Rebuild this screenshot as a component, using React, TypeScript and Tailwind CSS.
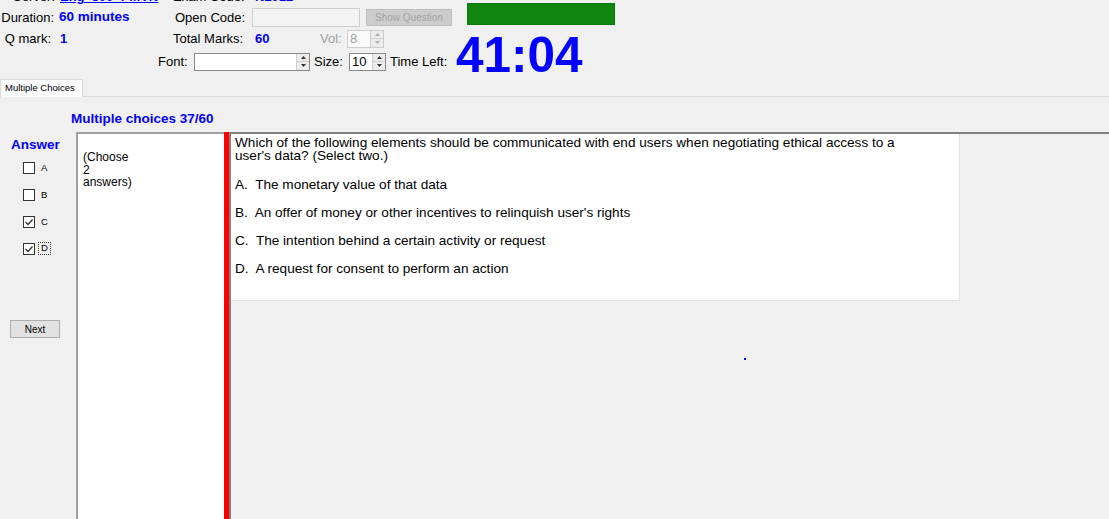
import React from "react";

function SpinArrows({ disabled }: { disabled?: boolean }) {
  const c = disabled ? "#b0b0b0" : "#333333";
  return (
    <div className="flex flex-col w-[13px] h-full border-l border-[#cfcfcf]">
      <div className="flex-1 flex items-center justify-center bg-[#ececec] border-b border-[#cfcfcf]">
        <svg width="5" height="3" viewBox="0 0 5 3">
          <path d="M0 3 L2.5 0 L5 3Z" fill={c} />
        </svg>
      </div>
      <div className="flex-1 flex items-center justify-center bg-[#ececec]">
        <svg width="5" height="3" viewBox="0 0 5 3">
          <path d="M0 0 L2.5 3 L5 0Z" fill={c} />
        </svg>
      </div>
    </div>
  );
}

function Spinner({ value, width, disabled }: { value: string; width: string; disabled?: boolean }) {
  return (
    <div
      className={`flex h-[18px] border ${width} ${
        disabled ? "border-[#cccccc] text-[#a0a0a0] bg-[#fafafa]" : "border-[#8a8a8a] text-black bg-white"
      }`}
    >
      <div className="flex-1 text-[13px] leading-[16px] pl-[2px]">{value}</div>
      <SpinArrows disabled={disabled} />
    </div>
  );
}

function Check({ label, checked, focus }: { label: string; checked?: boolean; focus?: boolean }) {
  return (
    <div className="h-[27px] flex items-center pl-[23px]">
      <div className="w-[12px] h-[12px] border border-[#333333] bg-white flex items-center justify-center">
        {checked && (
          <svg width="10" height="10" viewBox="0 0 10 10">
            <path d="M1.5 5 L4 7.5 L8.5 2.5" stroke="#333333" strokeWidth="1.3" fill="none" />
          </svg>
        )}
      </div>
      {focus ? (
        <span className="ml-[3px] px-[2px] h-[13px] flex items-center border border-dotted border-[#333333] text-[9.5px]">
          {label}
        </span>
      ) : (
        <span className="ml-[6px] text-[9.5px] leading-[11px]">{label}</span>
      )}
    </div>
  );
}

const options = [
  "A.  The monetary value of that data",
  "B.  An offer of money or other incentives to relinquish user's rights",
  "C.  The intention behind a certain activity or request",
  "D.  A request for consent to perform an action",
];

export default function App() {
  return (
    <div
      className="h-[519px] w-full overflow-hidden bg-[#f0f0f0] flex flex-col text-black"
      style={{ fontFamily: '"Liberation Sans", Arial, sans-serif' }}
    >
      {/* header */}
      <div className="h-[79px] flex shrink-0">
        <div className="w-[456px] flex flex-col text-[13px]">
          <div className="h-[20px] mt-[-13px] flex items-center">
            <span className="w-[55px] text-right">Server:</span>
            <span className="ml-[5px] w-[113px] font-bold text-[#0000ff] underline">Eng_500_PMVN</span>
            <span className="w-[82px]">Exam Code:</span>
            <span className="font-bold text-[#0000ff]">N2012</span>
          </div>
          <div className="h-[21px] flex items-center">
            <span className="w-[54px] text-right">Duration:</span>
            <span className="ml-[5px] w-[116px] font-bold text-[#0000ff] text-[13.5px]">60 minutes</span>
            <span className="w-[77px]">Open Code:</span>
            <div className="w-[108px] h-[19px] border border-[#cfcfcf] bg-[#f3f3f3]" />
            <div className="ml-[6px] w-[86px] h-[17px] bg-[#cccccc] border border-[#bfbfbf] flex items-center justify-center text-[10px] text-[#a3a3a3]">
              Show Question
            </div>
          </div>
          <div className="h-[21px] flex items-center">
            <span className="w-[51px] text-right">Q mark:</span>
            <span className="ml-[9px] w-[113px] font-bold text-[#0000ff]">1</span>
            <span className="w-[82px]">Total Marks:</span>
            <span className="w-[65px] font-bold text-[#0000ff]">60</span>
            <span className="w-[27px] text-[#a0a0a0]">Vol:</span>
            <Spinner value="8" width="w-[37px]" disabled />
          </div>
          <div className="h-[21px] mt-[2px] flex items-center">
            <span className="ml-[158px] w-[36px]">Font:</span>
            <Spinner value="" width="w-[116px]" />
            <span className="ml-[4px] w-[35px]">Size:</span>
            <Spinner value="10" width="w-[37px]" />
            <span className="ml-[4px]">Time Left:</span>
          </div>
        </div>
        <div className="flex flex-col">
          <div className="mt-[3px] ml-[11px] w-[148px] h-[24px] bg-[#0f870f] border border-[#0c7a0c]" />
          <div className="mt-[5px] text-[49.5px] leading-[49px] font-bold text-[#0000ff]">41:04</div>
        </div>
      </div>

      {/* tab strip */}
      <div className="h-[18px] shrink-0 flex border-b border-[#d9d9d9]">
        <div className="w-[83px] h-[18px] bg-[#fcfcfc] border border-b-0 border-[#d9d9d9] flex items-center pl-[4px] text-[9.5px]">
          Multiple Choices
        </div>
      </div>

      {/* panel title */}
      <div className="h-[35px] shrink-0 pt-[15px] pl-[71px] text-[13.5px] leading-[14px] font-bold text-[#0000ff]">
        Multiple choices 37/60
      </div>

      {/* main */}
      <div className="flex-1 min-h-0 flex">
        <div className="w-[76px] shrink-0 flex flex-col">
          <div className="pt-[6px] pl-[11px] text-[13.5px] leading-[14px] font-bold text-[#0000ff]">Answer</div>
          <div className="mt-[2px] flex flex-col">
            <Check label="A" />
            <Check label="B" />
            <Check label="C" checked />
            <Check label="D" checked focus />
          </div>
          <div className="mt-[58px] ml-[10px] w-[50px] h-[18px] bg-[#e1e1e1] border border-[#adadad] flex items-center justify-center text-[10px]">
            Next
          </div>
        </div>

        <div className="w-[148px] shrink-0 bg-white border-l-2 border-t-2 border-[#a0a0a0] pl-[5px] pt-[17px] text-[12px] leading-[12.5px]">
          (Choose
          <br />2
          <br />
          answers)
        </div>

        <div className="w-[5px] shrink-0 bg-[#ff0000]" />

        <div className="flex-1 min-w-0 border-l-2 border-t-2 border-[#808080] flex flex-col">
          <div className="w-[729px] h-[167px] bg-white border-r border-b border-[#e3e3e3] pl-[4px] pt-[2px] text-[13.6px] leading-[13px]">
            <div>
              Which of the following elements should be communicated with end users when negotiating ethical access to a
              <br />
              user's data? (Select two.)
            </div>
            {options.map((o, i) => (
              <div key={o} className={`whitespace-pre ${i === 0 ? "mt-[16px]" : "mt-[15px]"}`}>
                {o}
              </div>
            ))}
          </div>
          <div className="mt-[57px] ml-[513px] w-[2px] h-[2px] bg-[#0000ff]" />
        </div>
      </div>
    </div>
  );
}
